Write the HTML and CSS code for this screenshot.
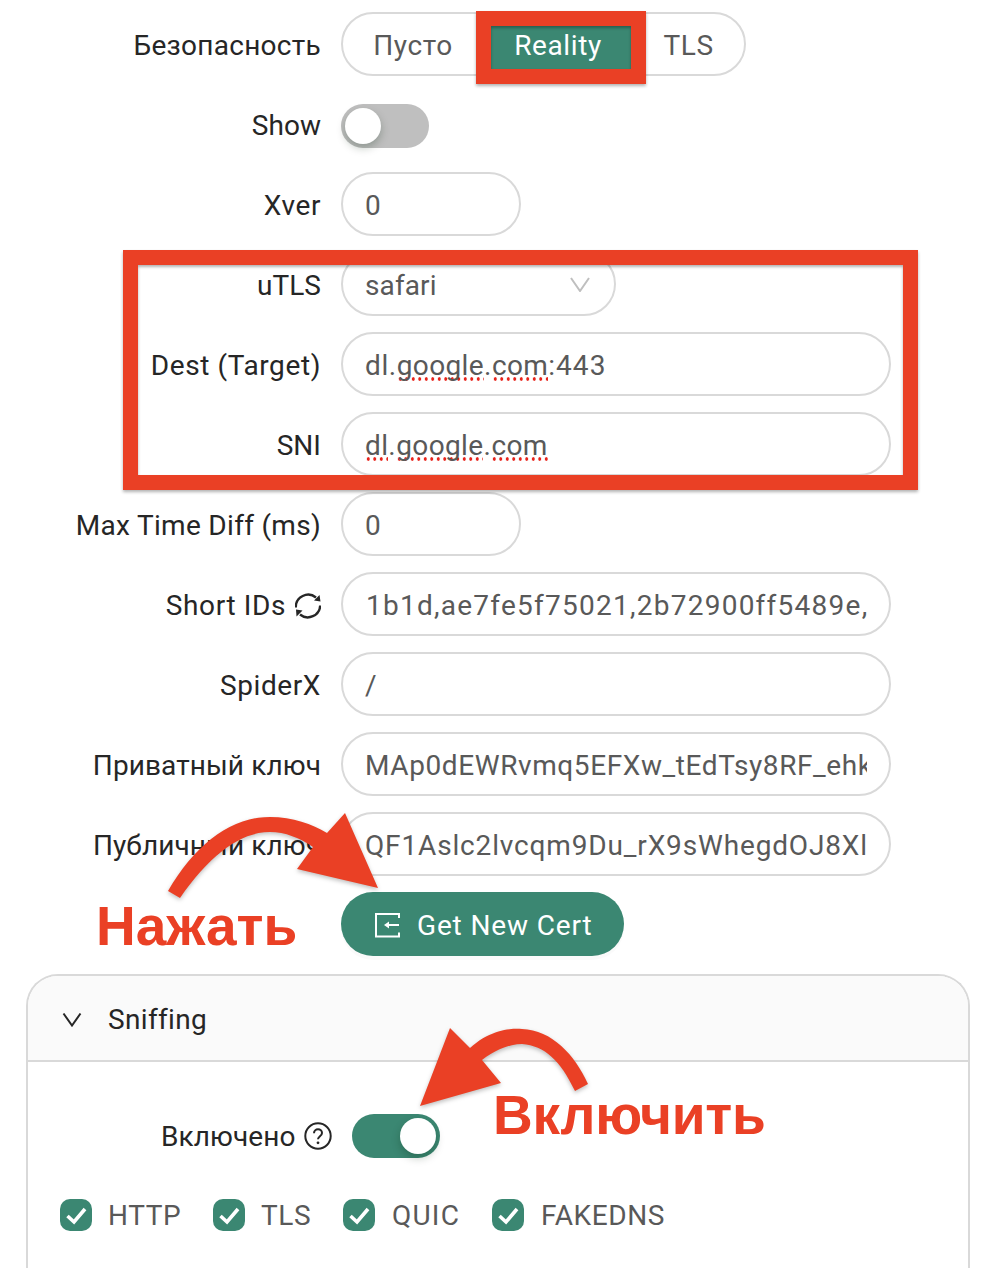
FILE: index.html
```html
<!DOCTYPE html>
<html lang="ru">
<head>
<meta charset="utf-8">
<title>Reality</title>
<link rel="stylesheet" href="styles.css">
</head>
<body>
<div class="page">
  <form class="form">
    <div class="row">
      <div class="label label-sec">Безопасность</div>
      <div class="segmented">
        <div class="seg seg-a ru">Пусто</div>
        <div class="seg seg-b">Reality</div>
        <div class="seg seg-c">TLS</div>
      </div>
    </div>
    <div class="row">
      <div class="label tight">Show</div>
      <div class="toggle toggle-off"><span class="knob"></span></div>
    </div>
    <div class="row">
      <div class="label">Xver</div>
      <div class="field field-short">0</div>
    </div>
    <div class="row">
      <div class="label tight">uTLS</div>
      <div class="field field-select">safari<svg class="chevron" viewBox="0 0 20 15"><path d="M1 1l9 13 9-13"/></svg></div>
    </div>
    <div class="row">
      <div class="label">Dest (Target)</div>
      <div class="field">dl.<span class="typo">google</span>.<span class="typo">com</span><span class="digits">:443</span></div>
    </div>
    <div class="row">
      <div class="label tight">SNI</div>
      <div class="field"><span class="typo">dl</span>.<span class="typo">google</span>.<span class="typo">com</span></div>
    </div>
    <div class="row">
      <div class="label label-max">Max Time Diff (ms)</div>
      <div class="field field-short">0</div>
    </div>
    <div class="row">
      <div class="label">Short IDs<svg class="sync" viewBox="0 0 26 26"><path d="M.8 14.500A12.400 12.400 0 0 1 21 4.500"/><path d="M25.200 12.500A12.400 12.400 0 0 1 5 21.500"/><path class="fill" d="M24.500 2l1 6.500-6.500-1zM1 16.500l6.500 1-6 6z"/></svg></div>
      <div class="field field-ids"><span class="clip">1b1d,ae7fe5f75021,2b72900ff5489e,</span></div>
    </div>
    <div class="row">
      <div class="label">SpiderX</div>
      <div class="field">/</div>
    </div>
    <div class="row">
      <div class="label ru">Приватный ключ</div>
      <div class="field"><span class="clip">MAp0dEWRvmq5EFXw_tEdTsy8RF_ehk</span></div>
    </div>
    <div class="row">
      <div class="label ru">Публичный ключ</div>
      <div class="field field-pub"><span class="clip">QF1Aslc2lvcqm9Du_rX9sWhegdOJ8Xl</span></div>
    </div>
    <div class="row">
      <div class="label"></div>
      <div class="button">
        <svg class="import" viewBox="0 0 25 25"><path d="M24 5V1H1v22.500h23v-4"/><path d="M24 12H12"/><path class="fill" d="M9 12l5-3.500v7z"/></svg>
        Get New Cert
      </div>
    </div>
  </form>

  <section class="card">
    <header class="card-head">
      <svg class="caret" viewBox="0 0 20 15"><path d="M1.500 1.500l8.500 12 8.500-12"/></svg>
      Sniffing
    </header>
    <div class="card-body">
      <div class="enabled">
        <div class="enabled-label ru">Включено
          <svg class="help" viewBox="0 0 28 28"><circle cx="14" cy="14" r="12.700"/><path d="M10 11.200c0-2.300 1.800-3.900 4-3.900s4 1.500 4 3.600c0 3.200-4 3.300-4 6.300"/><circle class="fill" cx="14" cy="20.800" r="1.400"/></svg>
        </div>
        <div class="toggle toggle-on"><span class="knob"></span></div>
      </div>
      <div class="checks">
        <div class="check c1"><span class="box"><svg viewBox="0 0 32 32"><path d="M7.500 17l6.500 6 11-13"/></svg></span>HTTP</div>
        <div class="check c2"><span class="box"><svg viewBox="0 0 32 32"><path d="M7.500 17l6.500 6 11-13"/></svg></span>TLS</div>
        <div class="check c3"><span class="box"><svg viewBox="0 0 32 32"><path d="M7.500 17l6.500 6 11-13"/></svg></span>QUIC</div>
        <div class="check c4"><span class="box"><svg viewBox="0 0 32 32"><path d="M7.500 17l6.500 6 11-13"/></svg></span>FAKEDNS</div>
      </div>
    </div>
  </section>

  <div class="mark mark-seg"></div>
  <div class="mark mark-fields"></div>
  <svg class="arrows" viewBox="0 0 988 1268">
    <path d="M168 891C195 845 230 817 270 817C293 817 312 824 327 833L345 813L378 888L297 869L313 847C300 838 285 832 270 832C240 832 210 855 180 898Z"/>
    <path d="M470 1048C490 1030 510 1028 522 1029C552 1030 575 1055 588 1084L575 1091C560 1060 545 1046 522 1044C510 1044 495 1050 482 1060L501 1083L420 1106L450 1028Z"/>
  </svg>
  <div class="note note-press">Нажать</div>
  <div class="note note-enable">Включить</div>
</div>
</body>
</html>
```
FILE: styles.css
```css
* { box-sizing: border-box; }
html, body { margin: 0; padding: 0; background: #fff; }
body { font-family: Roboto, "Noto Sans", sans-serif; font-size: 28px; letter-spacing: .6px; color: #262626; }
.ru { letter-spacing: .1px; }
.tight { letter-spacing: .05px; }
.page { position: relative; width: 988px; height: 1268px; overflow: hidden; padding-top: 12px; }
.form { display: flex; flex-direction: column; gap: 16px; }
.row { display: flex; align-items: center; gap: 20px; height: 64px; }
.label { width: 321px; flex: none; display: flex; justify-content: flex-end; align-items: center; gap: 9px; text-align: right; line-height: 36px; padding-top: 3px; }
.label-max { letter-spacing: .3px; }
.label-sec { letter-spacing: .28px; }

.segmented { display: flex; width: 405px; height: 64px; border: 2px solid #d9d9d9; border-radius: 32px; color: #595959; overflow: hidden; }
.seg { display: flex; align-items: center; justify-content: center; padding-top: 2px; }
.seg-a { width: 134px; padding-left: 6px; letter-spacing: .6px; }
.seg-b { width: 168px; background: #3b8772; color: #fff; padding-right: 6px; }
.seg-c { flex: 1; padding-right: 12px; }

.toggle { position: relative; width: 88px; height: 44px; border-radius: 22px; flex: none; }
.toggle-off { background: #bfbfbf; margin-top: 4px; }
.toggle-on { background: #3b8772; }
.knob { position: absolute; top: 4px; width: 36px; height: 36px; border-radius: 50%; background: #fff; box-shadow: 0 4px 8px rgba(0, 35, 11, .25); }
.toggle-off .knob { left: 4px; }
.toggle-on .knob { right: 4px; }

.field { position: relative; display: flex; align-items: center; width: 550px; height: 64px; border: 2px solid #d9d9d9; border-radius: 32px; padding: 2px 22px 0; color: #595959; white-space: pre; background: #fff; }
.field-short { width: 180px; }
.field-select { width: 275px; letter-spacing: .1px; }
.field-ids { letter-spacing: 1.250px; padding-left: 23px; }
.field-pub { letter-spacing: .85px; }
.clip { display: block; width: 100%; overflow: hidden; }
.typo { letter-spacing: .35px; background: radial-gradient(circle at center, #e8231b 1.500px, transparent 1.900px) 0 calc(100% - 1px) / 6.500px 4px repeat-x; }
.digits { letter-spacing: 1.100px; }
.chevron { position: absolute; left: 227px; top: 23px; width: 20px; height: 15px; }
.chevron path { fill: none; stroke: #bfbfbf; stroke-width: 2; }

.sync { width: 26px; height: 26px; flex: none; }
.sync path { fill: none; stroke: #262626; stroke-width: 2.400; }
.sync .fill, .import .fill { fill: #fff; stroke: none; }
.sync .fill { fill: #262626; }

.button { display: flex; align-items: center; gap: 17px; width: 283px; height: 64px; padding: 2px 0 0 34px; border-radius: 32px; background: #3b8772; color: #fff; letter-spacing: .85px; box-shadow: 0 4px 0 rgba(0, 0, 0, .02); }
.import { width: 25px; height: 25px; flex: none; }
.import path { fill: none; stroke: #fff; stroke-width: 2; }

.card { width: 944px; height: 400px; margin: 18px 0 0 26px; border: 2px solid #d9d9d9; border-radius: 32px 32px 0 0; border-bottom: 0; overflow: hidden; }
.card-head { display: flex; align-items: center; gap: 26px; height: 86px; padding: 2px 0 0 34px; background: #fafafa; border-bottom: 2px solid #d9d9d9; letter-spacing: .35px; }
.caret { width: 20px; height: 15px; flex: none; }
.caret path { fill: none; stroke: #262626; stroke-width: 2; }
.card-body { padding: 52px 0 0 32px; }
.enabled { display: flex; align-items: center; gap: 20px; height: 44px; padding-left: 101px; }
.enabled-label { display: flex; align-items: center; gap: 8px; }
.help { width: 28px; height: 28px; flex: none; }
.help circle, .help path { fill: none; stroke: #262626; stroke-width: 2; }
.help .fill { fill: #262626; stroke: none; }

.checks { display: flex; align-items: center; height: 32px; margin-top: 41px; color: #595959; }
.check { display: flex; align-items: center; gap: 16px; }
.c1 { width: 153px; }
.c2 { width: 130px; }
.c3 { width: 149px; letter-spacing: 1.200px; }
.c3 .box { margin-right: 1px; }
.c4 .box { margin-right: 1px; }
.box { width: 32px; height: 32px; border-radius: 10px; background: #3b8772; flex: none; }
.box svg { display: block; width: 32px; height: 32px; }
.box path { fill: none; stroke: #fff; stroke-width: 3.600; }

.mark { position: absolute; border: 15px solid #ea4025; box-shadow: 0 2px 3px rgba(0, 0, 0, .3), inset 0 2px 3px rgba(0, 0, 0, .3); }
.mark-seg { left: 476px; top: 11px; width: 170px; height: 73px; }
.mark-fields { left: 123px; top: 250px; width: 795px; height: 240px; }
.arrows { position: absolute; left: 0; top: 0; width: 988px; height: 1268px; filter: drop-shadow(0 2px 2px rgba(0, 0, 0, .25)); }
.arrows path { fill: #ea4025; }
.note { position: absolute; font-family: "Liberation Sans", Arial, sans-serif; font-weight: 700; color: #ea4025; font-size: 55px; line-height: 64px; letter-spacing: 0; white-space: nowrap; }
.note-press { left: 96px; top: 894px; }
.note-enable { left: 493px; top: 1083px; letter-spacing: -.2px; }
```
